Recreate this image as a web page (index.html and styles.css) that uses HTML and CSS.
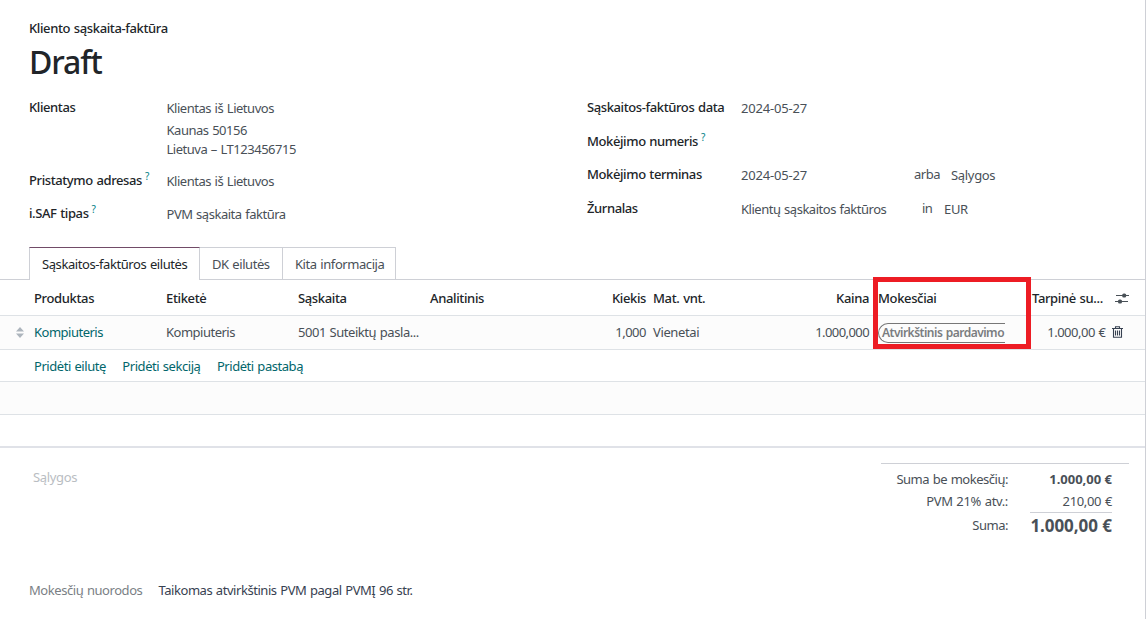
FILE: index.html
```html
<!DOCTYPE html>
<html lang="lt">
<head>
<meta charset="utf-8">
<title>Kliento sąskaita-faktūra</title>
<link rel="stylesheet" href="styles.css">
</head>
<body>
<main class="sheet">
  <header class="title">
    <div class="kind"><span>Kliento sąskaita-faktūra</span></div>
    <h1><span>Draft</span></h1>
  </header>
  <section class="fields">
    <div class="group">
      <div class="field customer"><label>Klientas</label><div class="value"><div class="name">Klientas iš Lietuvos</div><div class="addr">Kaunas 50156</div><div class="addr">Lietuva – LT123456715</div></div></div>
      <div class="field"><label>Pristatymo adresas<sup>?</sup></label><div class="value">Klientas iš Lietuvos</div></div>
      <div class="field"><label>i.SAF tipas<sup>?</sup></label><div class="value">PVM sąskaita faktūra</div></div>
    </div>
    <div class="group group-right">
      <div class="field"><label>Sąskaitos-faktūros data</label><div class="value date">2024-05-27</div></div>
      <div class="field"><label>Mokėjimo numeris<sup>?</sup></label></div>
      <div class="field"><label>Mokėjimo terminas</label><div class="value date">2024-05-27</div><span class="joiner">arba</span><div class="extra">Sąlygos</div></div>
      <div class="field"><label>Žurnalas</label><div class="value">Klientų sąskaitos faktūros</div><span class="joiner joiner-in">in</span><div class="extra">EUR</div></div>
    </div>
  </section>
  <nav class="tabs">
    <a class="tab tab-lines">Sąskaitos-faktūros eilutės</a><a class="tab tab-dk">DK eilutės</a><a class="tab tab-info">Kita informacija</a>
  </nav>
  <section class="lines">
    <div class="row head">
      <span></span><span>Produktas</span><span>Etiketė</span><span>Sąskaita</span><span>Analitinis</span><span class="num">Kiekis</span><span class="after-num">Mat. vnt.</span><span class="num">Kaina</span><span class="taxes">Mokesčiai</span><span class="subtotal-head">Tarpinė su...</span>
      <svg class="sliders" width="14" height="12" viewBox="0 0 14 12"><path d="M1 3.5h13M0 9.5h13" stroke="#495057" stroke-width="1.2"/><rect x="7.2" y="1.5" width="4" height="4" rx="1.6" fill="#495057"/><rect x="3" y="7.5" width="4" height="4" rx="1.6" fill="#495057"/></svg>
      <div class="highlight"></div>
    </div>
    <div class="row item">
      <svg class="grip" width="8" height="11" viewBox="0 0 8 11"><path d="M4 0L8 4.6H0zM0 6.4h8L4 11z" fill="#adb5bd"/></svg>
      <span class="link">Kompiuteris</span><span>Kompiuteris</span><span class="account">5001 Suteiktų pasla...</span><span></span><span class="num">1,000</span><span class="after-num">Vienetai</span><span class="num price">1.000,000</span><span class="taxes"><span class="tag">Atvirkštinis pardavimo</span></span><span class="subtotal">1.000,00 €</span>
      <svg class="trash" width="11" height="12" viewBox="0 0 11 12"><path d="M0 2.5h11M3.5 2.2V.7h4v1.5M1.5 2.7v8.6h8V2.7M3.5 4.5v5M5.5 4.5v5M7.5 4.5v5" fill="none" stroke="#374151" stroke-width="1.1"/></svg>
    </div>
    <div class="row-actions"><a>Pridėti eilutę</a><a>Pridėti sekciją</a><a>Pridėti pastabą</a></div>
    <div class="blank shaded"></div>
    <div class="blank last"></div>
  </section>
  <section class="footer">
    <div class="notes">Sąlygos</div>
    <div class="totals">
      <div class="total"><span>Suma be mokesčių:</span><b>1.000,00 €</b></div>
      <div class="total tax"><span>PVM 21% atv.:</span><span>210,00 €</span></div>
      <div class="total grand"><span>Suma:</span><b>1.000,00 €</b></div>
    </div>
  </section>
  <section class="refs"><span class="refs-label">Mokesčių nuorodos</span><span class="refs-value">Taikomas atvirkštinis PVM pagal PVMĮ 96 str.</span></section>
</main>
</body>
</html>
```

FILE: styles.css
```css
* { box-sizing: border-box; }
body { margin: 0; background: #fff; font: 13px/20px "Noto Sans", "Open Sans", sans-serif; letter-spacing: -0.48px; word-spacing: 0.7px; color: #495057; overflow: hidden; }
.sheet { width: 1146px; height: 619px; border-right: 1px solid #ced0d6; white-space: nowrap; }
.title { height: 97px; padding: 18px 0 0 29px; color: #212529; }
.kind { font-weight: 500; letter-spacing: -0.38px; }
h1 { margin: 2px 0 0; font-size: 32px; line-height: 44px; font-weight: 500; letter-spacing: -1.1px; }
.fields { display: grid; grid-template-columns: 558px 1fr; height: 150px; padding-left: 29px; }
.field { display: flex; height: 33.5px; }
.customer { height: 73px; }
label { width: 137.5px; color: #212529; font-weight: 500; letter-spacing: -0.4px; }
.group:not(.group-right) .field:last-child { margin-top: -0.6px; }
.group-right label { width: 154px; }
.value, .extra { padding-top: 1px; }
.extra { letter-spacing: -0.32px; }
.addr { line-height: 19px; }
.name { height: 23px; }
.group-right .value { width: 173px; }
.group-right .date { letter-spacing: -0.18px; }
.joiner { width: 37px; }
.joiner-in { padding-left: 8px; width: 30px; }
sup { font-size: 10px; line-height: 10px; color: #017e84; margin-left: 3px; vertical-align: 5px; font-weight: 400; }
.tabs { display: flex; height: 33px; padding-left: 29px; border-bottom: 1px solid #ced0d6; }
.tab { height: 32px; border: 1px solid #ced0d6; border-width: 1px 1px 0 0; padding: 6px 0 0 12px; letter-spacing: -0.43px; }
.tab-lines { width: 171px; height: 33px; border-left-width: 1px; border-top-color: #714b67; background: #fff; color: #212529; letter-spacing: -0.42px; }
.tab-dk { width: 83px; }
.tab-info { width: 113px; }
.row { display: grid; grid-template-columns: 34px 132px 132px 132px 132px 84px 83px 140px 163px 80px 1fr; align-items: center; border-bottom: 1px solid #dee2e6; }
.head { position: relative; height: 36px; color: #212529; font-weight: 500; letter-spacing: -0.36px; }
.item { height: 34px; padding-bottom: 1px; background: #fcfcfc; letter-spacing: -0.5px; }
.account { letter-spacing: -0.45px; }
.num { text-align: right; }
.item .after-num { letter-spacing: -0.38px; }
.after-num { padding-left: 7px; }
.price { letter-spacing: -0.58px; }
.taxes { padding-left: 9px; }
.subtotal { width: 73.5px; text-align: right; letter-spacing: -0.48px; }
.grip { margin-left: 16px; }
.link, .row-actions { color: #01666b; }
.sliders { margin-left: 3px; }
.trash { margin-left: -0.4px; }
.tag { display: block; width: 127px; height: 20px; border: 1px solid #777; border-right: 0; border-radius: 10px 0 0 10px; padding-left: 3px; margin-top: 1px; font-size: 12px; line-height: 18px; font-weight: 600; color: #7a7d80; }
.highlight { position: absolute; left: 873px; top: -3px; width: 158px; height: 72px; border: 5px solid #ed1c24; }
.row-actions { display: flex; gap: 16.5px; height: 32px; padding: 6px 0 0 34px; border-bottom: 1px solid #dee2e6; letter-spacing: -0.45px; }
.blank { height: 33px; border-bottom: 1px solid #dee2e6; }
.shaded { background: #fcfcfc; }
.last { border-bottom: 2px solid #e0e2e8; }
.footer { display: flex; justify-content: space-between; height: 132px; padding: 15px 16px 0 33px; }
.notes { padding-top: 4px; letter-spacing: -0.35px; color: #b9bdc2; }
.totals { width: 248px; height: 75px; padding: 4px 17px 0 0; border-top: 1px solid #ced0d6; }
.total { display: grid; grid-template-columns: 1fr 82px; column-gap: 22px; text-align: right; height: 22px; line-height: 22px; }
.total b { letter-spacing: 0; word-spacing: 0; }
.tax { letter-spacing: -0.35px; }
.grand { height: 26px; line-height: 26px; }
.grand b { font-size: 17px; line-height: 25px; letter-spacing: -0.05px; border-top: 1px solid #ced0d6; }
.refs { display: flex; padding-left: 29px; }
.refs-label { width: 129.5px; letter-spacing: -0.44px; color: #7a7f85; }
.refs-value { letter-spacing: -0.45px; color: #374151; }
```
